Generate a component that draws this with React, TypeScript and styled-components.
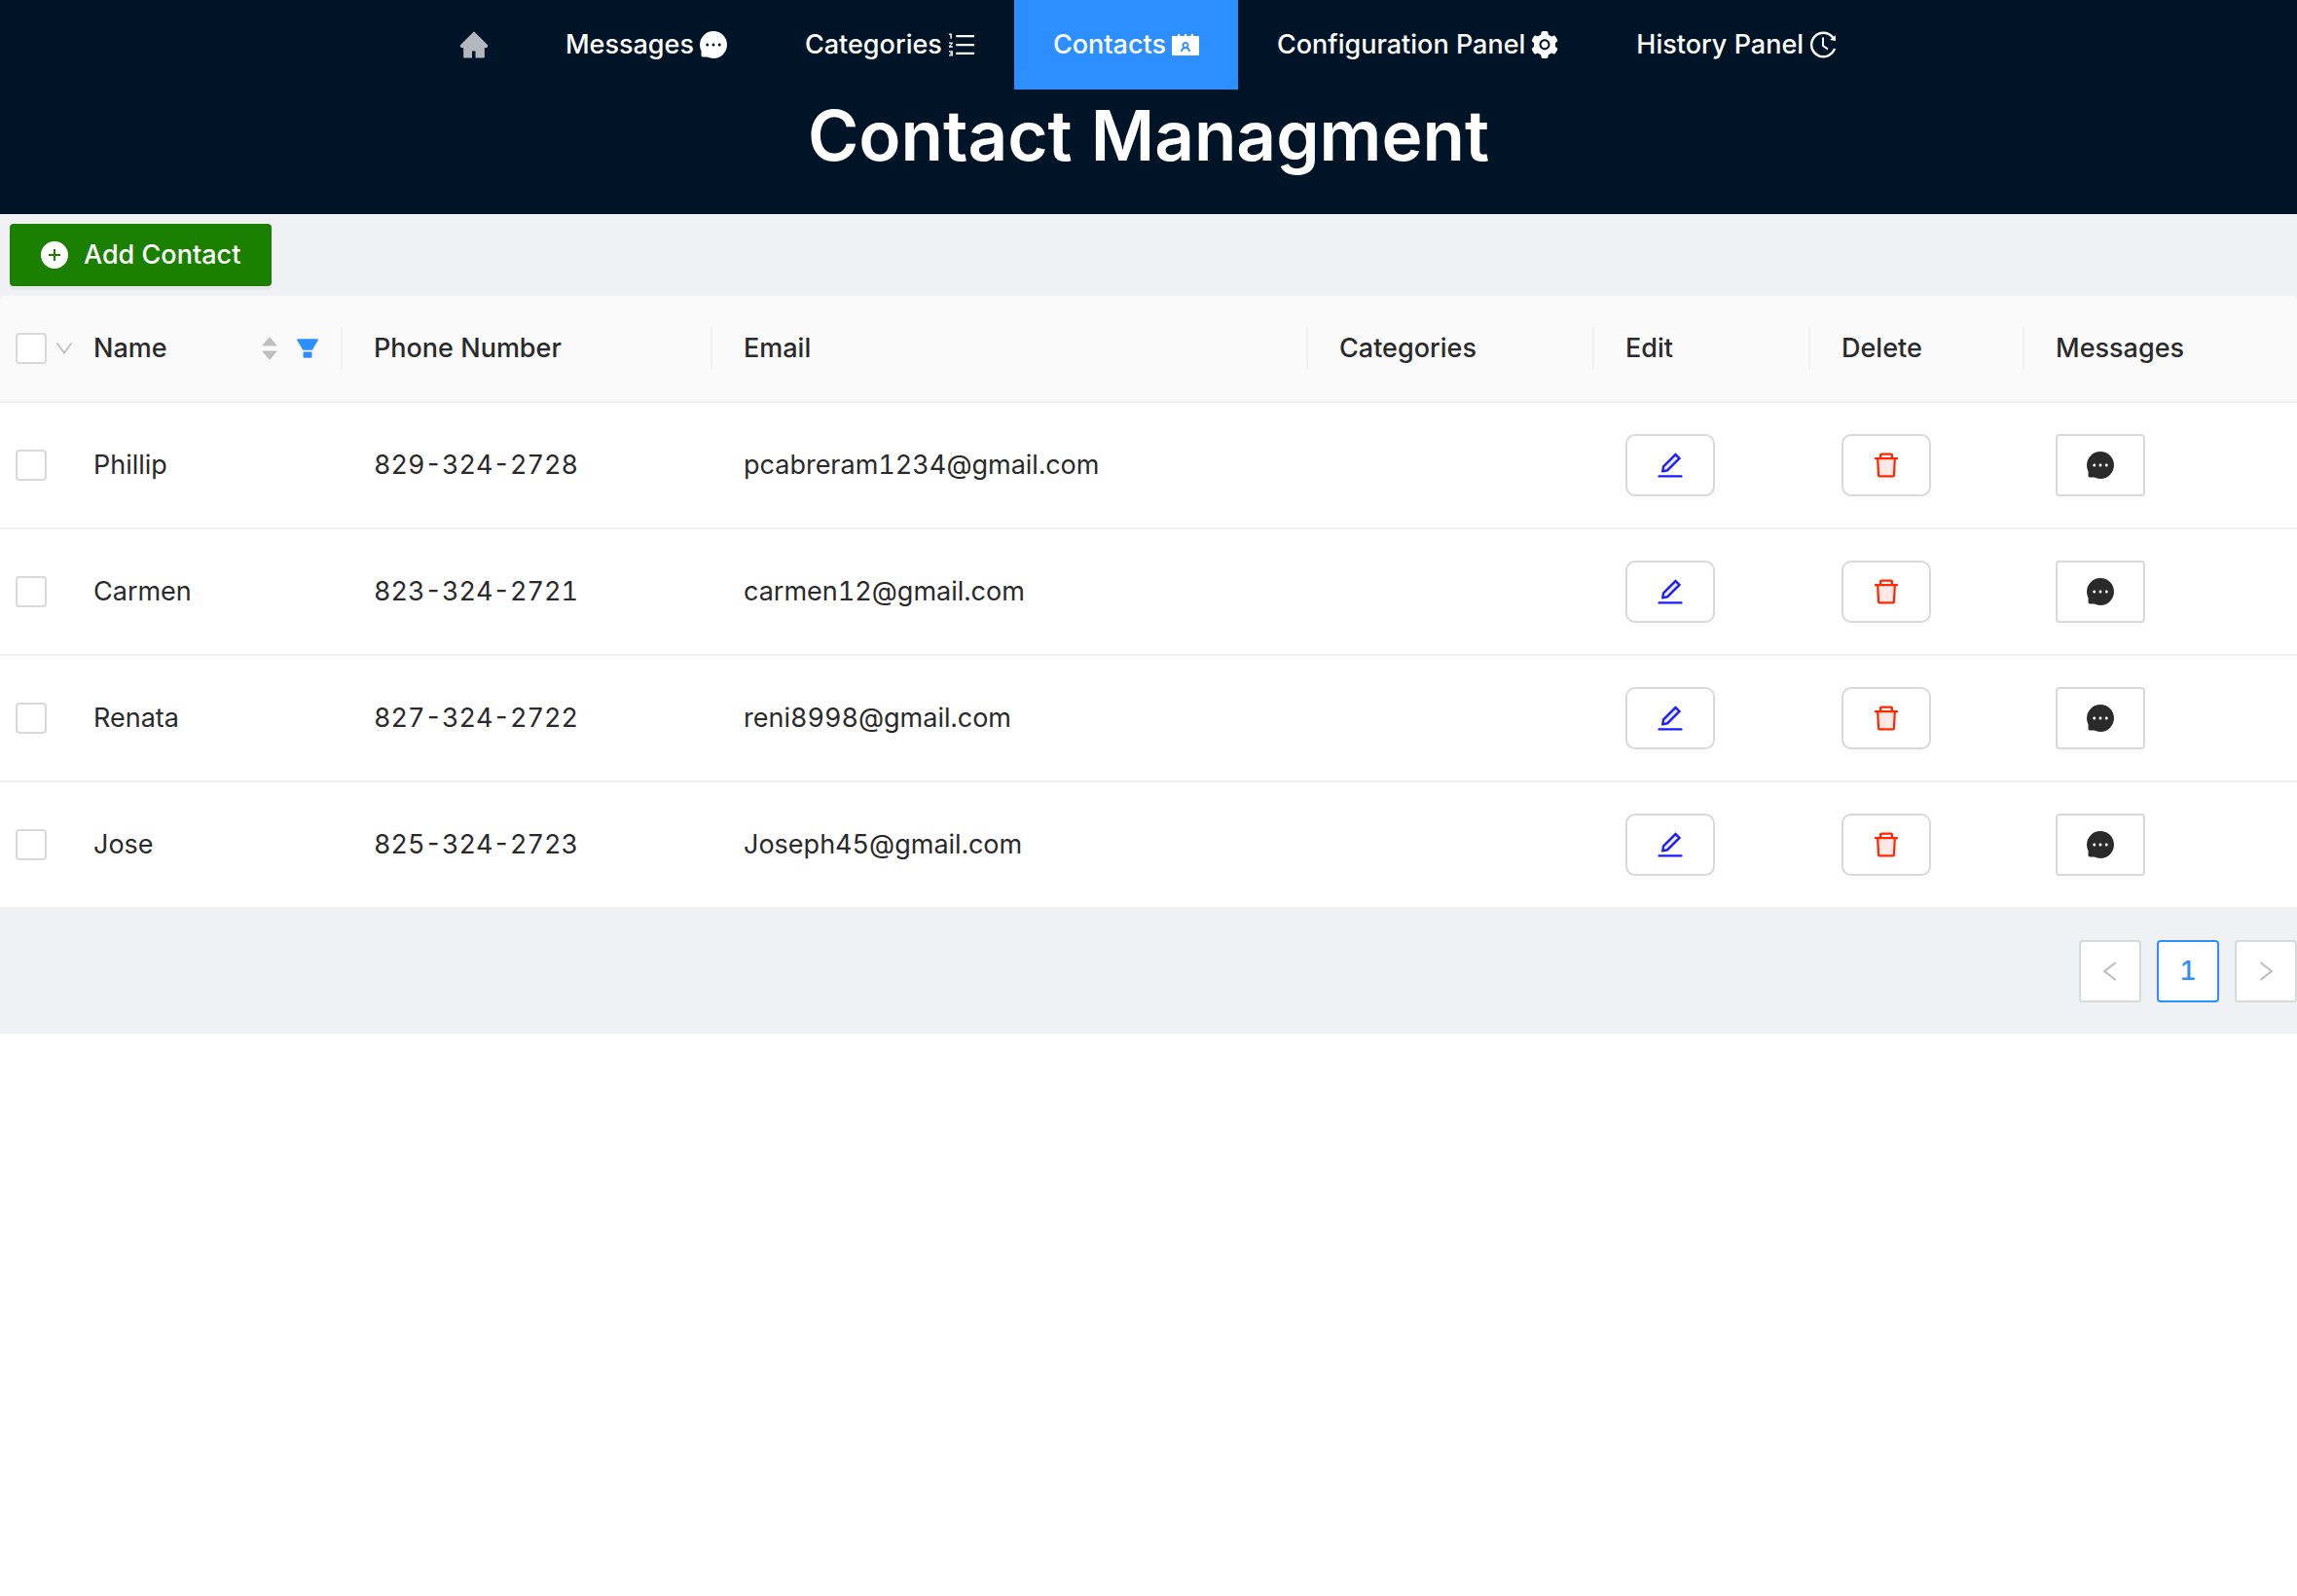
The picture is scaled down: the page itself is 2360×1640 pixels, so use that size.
import React, { useState } from "react";
import styled, { createGlobalStyle } from "styled-components";
import {
  AiFillCaretDown,
  AiFillCaretUp,
  AiFillContacts,
  AiFillFilter,
  AiFillHome,
  AiFillMessage,
  AiFillPlusCircle,
  AiFillSetting,
  AiOutlineDown,
  AiOutlineHistory,
  AiOutlineLeft,
  AiOutlineOrderedList,
  AiOutlineRight,
} from "react-icons/ai";

const color = {
  navy: "#001427",
  blue: "#2d8fff",
  green: "#1b7f00",
  layout: "#f0f1f5",
  line: "#f0f0f0",
  border: "#d9d9d9",
  text: "#2a2a2a",
  muted: "#bfbfbf",
  edit: "#1b1bff",
  danger: "#ff2600",
};

const GlobalStyle = createGlobalStyle`
  *, *::before, *::after { box-sizing: border-box; }
  body {
    margin: 0;
    background: #fff;
    color: ${color.text};
    font-family: Inter, "Liberation Sans", sans-serif;
    font-size: 27px;
    line-height: 44px;
    font-variant-numeric: tabular-nums;
  }
  button, input { font: inherit; }
  svg { display: block; flex: none; }
`;

const Layout = styled.div`
  background: ${color.layout};
`;

const Header = styled.header`
  height: 220px;
  background: ${color.navy};
  color: #fff;
`;

const Nav = styled.nav`
  display: flex;
  justify-content: center;
`;

const NavLink = styled.a<{ $active?: boolean; $dim?: boolean }>`
  display: flex;
  align-items: center;
  gap: 6px;
  height: 92px;
  padding: 0 40px;
  font-weight: 500;
  text-decoration: none;
  white-space: nowrap;
  color: ${(p) => (p.$dim ? "#b2b8be" : "#fff")};
  background: ${(p) => (p.$active ? color.blue : "transparent")};
`;

const Title = styled.h1`
  margin: 0;
  font-size: 71px;
  line-height: 94px;
  font-weight: 600;
  text-align: center;
`;

const Toolbar = styled.div`
  display: flex;
  padding: 10px;
`;

const AddButton = styled.button`
  display: flex;
  align-items: center;
  gap: 16px;
  height: 64px;
  padding: 0 32px;
  border: 0;
  border-radius: 4px;
  background: ${color.green};
  color: #fff;
  font-weight: 500;
  box-shadow: 0 4px 0 rgba(0, 0, 0, 0.04);
`;

const Table = styled.table`
  width: 100%;
  table-layout: fixed;
  border-collapse: separate;
  border-spacing: 0;
  background: #fff;
  border-radius: 4px 4px 0 0;
`;

const Col = styled.col<{ $width?: number }>`
  width: ${(p) => (p.$width ? `${p.$width}px` : "auto")};
`;

const Th = styled.th`
  height: 110px;
  padding: 0 0 0 32px;
  background: #fafafa;
  border-bottom: 2px solid ${color.line};
  text-align: left;
  font-weight: 500;

  &:first-child {
    padding-left: 16px;
    border-top-left-radius: 4px;
  }
  &:last-child {
    border-top-right-radius: 4px;
  }
`;

const HeadCell = styled.div<{ $divided?: boolean }>`
  display: flex;
  align-items: center;
  height: 44px;
  border-right: ${(p) => (p.$divided ? `2px solid ${color.line}` : "0")};
`;

const HeadLabel = styled.span`
  flex: 1;
`;

const IconButton = styled.button<{ $color: string }>`
  display: flex;
  flex-direction: column;
  flex: none;
  padding: 0;
  border: 0;
  background: none;
  color: ${(p) => p.$color};
`;

const SortButton = styled(IconButton)`
  margin-right: 14px;
  svg + svg {
    margin-top: -8px;
  }
`;

const FilterButton = styled(IconButton)`
  margin-right: 20px;
`;

const MenuButton = styled(IconButton)`
  margin-left: 8px;
`;

const Checkbox = styled.input`
  appearance: none;
  display: block;
  flex: none;
  width: 32px;
  height: 32px;
  margin: 0;
  border: 2px solid ${color.border};
  border-radius: 4px;
  background: #fff;

  &:checked {
    border-color: ${color.blue};
    background: ${color.blue};
  }
`;

const Td = styled.td`
  height: 130px;
  padding: 0 0 0 32px;
  border-bottom: 2px solid ${color.line};

  &:first-child {
    padding-left: 16px;
  }
`;

const ActionButton = styled.button<{ $round?: boolean }>`
  display: flex;
  align-items: center;
  justify-content: center;
  width: 92px;
  height: 64px;
  padding: 0;
  border: 2px solid ${color.border};
  border-radius: ${(p) => (p.$round ? 10 : 4)}px;
  background: #fff;
  color: ${color.text};
  box-shadow: 0 4px 0 rgba(0, 0, 0, 0.01);
`;

const Pagination = styled.nav`
  display: flex;
  justify-content: flex-end;
  gap: 16px;
  padding: 32px 0;
`;

const PageButton = styled.button<{ $current?: boolean }>`
  display: flex;
  align-items: center;
  justify-content: center;
  width: 64px;
  height: 64px;
  padding: 0;
  border: 2px solid ${(p) => (p.$current ? color.blue : color.border)};
  border-radius: 4px;
  background: #fff;
  color: ${(p) => (p.$current ? color.blue : color.muted)};
  font-weight: 500;
`;

const EditIcon = () => (
  <svg viewBox="64 64 896 896" width="28" height="28" aria-hidden="true">
    <path fill="#e8e8ff" d="M761.1 288.3L687.8 215 325.1 577.6l-15.6 89 88.9-15.7z" />
    <path
      fill={color.edit}
      d="M880 836H144c-17.7 0-32 14.3-32 32v36c0 4.4 3.6 8 8 8h784c4.4 0 8-3.6 8-8v-36c0-17.7-14.3-32-32-32zm-622.3-84c2 0 4-.2 6-.5L431.9 722c2-.4 3.9-1.3 5.3-2.8l423.9-423.9a9.96 9.96 0 0 0 0-14.1L694.9 114.9c-1.9-1.9-4.4-2.9-7.1-2.9s-5.2 1-7.1 2.9L256.8 538.8c-1.5 1.5-2.4 3.3-2.8 5.3l-29.5 168.2a33.5 33.5 0 0 0 9.4 29.8c6.6 6.4 14.9 9.9 23.8 9.9zm67.4-174.4L687.8 215l73.3 73.3-362.7 362.6-88.9 15.7 15.6-89z"
    />
  </svg>
);

const DeleteIcon = () => (
  <svg viewBox="64 64 896 896" width="28" height="28" aria-hidden="true">
    <path fill="#ffe9e6" d="M292.7 840h438.6l24.2-512h-487z" />
    <path
      fill={color.danger}
      d="M864 256H736v-80c0-35.3-28.7-64-64-64H352c-35.3 0-64 28.7-64 64v80H160c-17.7 0-32 14.3-32 32v32c0 4.4 3.6 8 8 8h60.4l24.7 523c1.6 34.1 29.8 61 63.9 61h454c34.2 0 62.3-26.8 63.9-61l24.7-523H888c4.4 0 8-3.6 8-8v-32c0-17.7-14.3-32-32-32zm-504-72h304v72H360v-72zm371.3 656H292.7l-24.2-512h487l-24.2 512z"
    />
  </svg>
);

// The outlined and filled icons are drawn on a 1024 grid; trimming its margin gives the full-size glyph.
const glyph = (size: number) => ({ size, viewBox: "64 64 896 896", "aria-hidden": true });

const contacts = [
  { name: "Phillip", phone: "829-324-2728", email: "pcabreram1234@gmail.com" },
  { name: "Carmen", phone: "823-324-2721", email: "carmen12@gmail.com" },
  { name: "Renata", phone: "827-324-2722", email: "reni8998@gmail.com" },
  { name: "Jose", phone: "825-324-2723", email: "Joseph45@gmail.com" },
];

const columns = ["Phone Number", "Email", "Categories", "Edit", "Delete", "Messages"];

export default function App() {
  const [selected, setSelected] = useState<string[]>([]);
  const allSelected = selected.length === contacts.length;
  const toggle = (name: string) =>
    setSelected((s) => (s.includes(name) ? s.filter((n) => n !== name) : [...s, name]));

  return (
    <Layout>
      <GlobalStyle />
      <Header>
        <Nav aria-label="Main">
          <NavLink href="#home" aria-label="Home" $dim>
            <AiFillHome {...glyph(28)} />
          </NavLink>
          <NavLink href="#messages">
            Messages
            <AiFillMessage {...glyph(28)} />
          </NavLink>
          <NavLink href="#categories">
            Categories
            <AiOutlineOrderedList {...glyph(28)} />
          </NavLink>
          <NavLink href="#contacts" aria-current="page" $active>
            Contacts
            <AiFillContacts {...glyph(28)} />
          </NavLink>
          <NavLink href="#configuration">
            Configuration Panel
            <AiFillSetting {...glyph(28)} />
          </NavLink>
          <NavLink href="#history">
            History Panel
            <AiOutlineHistory {...glyph(28)} />
          </NavLink>
        </Nav>
        <Title>Contact Managment</Title>
      </Header>
      <Toolbar>
        <AddButton type="button">
          <AiFillPlusCircle {...glyph(28)} />
          Add Contact
        </AddButton>
      </Toolbar>
      <Table>
        <colgroup>
          <Col $width={64} />
          <Col $width={288} />
          <Col $width={380} />
          <Col />
          <Col $width={294} />
          <Col $width={222} />
          <Col $width={220} />
          <Col $width={280} />
        </colgroup>
        <thead>
          <tr>
            <Th scope="col">
              <HeadCell>
                <Checkbox
                  type="checkbox"
                  aria-label="Select all contacts"
                  checked={allSelected}
                  onChange={() => setSelected(allSelected ? [] : contacts.map((c) => c.name))}
                />
                <MenuButton type="button" aria-label="Selection options" $color={color.muted}>
                  <AiOutlineDown {...glyph(20)} />
                </MenuButton>
              </HeadCell>
            </Th>
            <Th scope="col">
              <HeadCell $divided>
                <HeadLabel>Name</HeadLabel>
                <SortButton type="button" aria-label="Sort by name" $color={color.muted}>
                  <AiFillCaretUp size={22} />
                  <AiFillCaretDown size={22} />
                </SortButton>
                <FilterButton type="button" aria-label="Filter by name" $color={color.blue}>
                  <AiFillFilter size={28} />
                </FilterButton>
              </HeadCell>
            </Th>
            {columns.map((label, i) => (
              <Th key={label} scope="col">
                <HeadCell $divided={i < columns.length - 1}>{label}</HeadCell>
              </Th>
            ))}
          </tr>
        </thead>
        <tbody>
          {contacts.map(({ name, phone, email }) => (
            <tr key={name}>
              <Td>
                <Checkbox
                  type="checkbox"
                  aria-label={`Select ${name}`}
                  checked={selected.includes(name)}
                  onChange={() => toggle(name)}
                />
              </Td>
              <Td>{name}</Td>
              <Td>{phone}</Td>
              <Td>{email}</Td>
              <Td />
              <Td>
                <ActionButton type="button" aria-label={`Edit ${name}`} $round>
                  <EditIcon />
                </ActionButton>
              </Td>
              <Td>
                <ActionButton type="button" aria-label={`Delete ${name}`} $round>
                  <DeleteIcon />
                </ActionButton>
              </Td>
              <Td>
                <ActionButton type="button" aria-label={`Message ${name}`}>
                  <AiFillMessage {...glyph(28)} />
                </ActionButton>
              </Td>
            </tr>
          ))}
        </tbody>
      </Table>
      <Pagination aria-label="Pages">
        <PageButton type="button" aria-label="Previous page" disabled>
          <AiOutlineLeft {...glyph(24)} />
        </PageButton>
        <PageButton type="button" aria-current="page" $current>
          1
        </PageButton>
        <PageButton type="button" aria-label="Next page" disabled>
          <AiOutlineRight {...glyph(24)} />
        </PageButton>
      </Pagination>
    </Layout>
  );
}
